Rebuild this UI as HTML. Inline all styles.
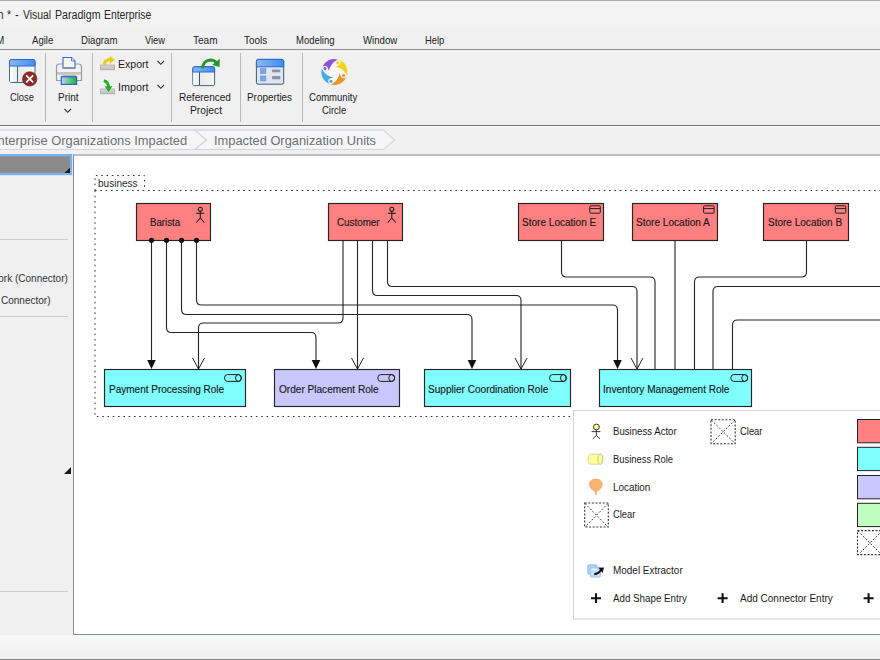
<!DOCTYPE html>
<html><head><meta charset="utf-8"><style>
html,body{margin:0;padding:0;width:880px;height:660px;overflow:hidden;background:#f0f0f0;}
body{position:relative;font-family:"Liberation Sans",sans-serif;}
.a{position:absolute;}
.tx{position:absolute;white-space:pre;line-height:1;font-family:"Liberation Sans",sans-serif;}
</style></head><body>
<!-- title bar -->
<div class="a" style="left:0;top:0;width:880px;height:1px;background:#a8a8a8"></div>
<div class="a" style="left:0;top:1px;width:880px;height:27px;background:linear-gradient(#f4f4f4,#f2f2f2)"></div>
<!-- menu -->
<div class="a" style="left:0;top:28px;width:880px;height:21px;background:#f0f0f0"></div>
<div class="a" style="left:0;top:49px;width:880px;height:1px;background:#8c8c8c"></div>
<!-- toolbar -->
<div class="a" style="left:0;top:50px;width:880px;height:75px;background:#f0f0f0"></div>
<div class="a" style="left:45px;top:53px;width:1px;height:69px;background:#b9b9b9"></div>
<div class="a" style="left:92px;top:53px;width:1px;height:69px;background:#b9b9b9"></div>
<div class="a" style="left:171px;top:53px;width:1px;height:69px;background:#b9b9b9"></div>
<div class="a" style="left:240px;top:53px;width:1px;height:69px;background:#b9b9b9"></div>
<div class="a" style="left:302px;top:53px;width:1px;height:69px;background:#b9b9b9"></div>
<div class="a" style="left:0;top:125px;width:880px;height:1px;background:#737373"></div>
<div class="a" style="left:0;top:126px;width:880px;height:1px;background:#fbfbfb"></div>
<!-- breadcrumb -->
<div class="a" style="left:0;top:127px;width:880px;height:27px;background:#f0f0f0"></div>
<!-- left panel -->
<div class="a" style="left:0;top:155px;width:73px;height:480px;background:#f0f0f0"></div>
<div class="a" style="left:0;top:239px;width:68px;height:1px;background:#cdcdcd"></div>
<div class="a" style="left:0;top:316px;width:68px;height:1px;background:#cdcdcd"></div>
<div class="a" style="left:0;top:591px;width:68px;height:1px;background:#cdcdcd"></div>
<!-- canvas -->
<div class="a" style="left:73px;top:154px;width:807px;height:481px;background:#ffffff;box-sizing:border-box;border-left:1px solid #858b97;border-top:2px solid #bdbfc5;border-bottom:1px solid #858b97"></div>
<!-- status bar -->
<div class="a" style="left:0;top:635px;width:880px;height:24px;background:linear-gradient(#f9f9f9,#efefef)"></div>
<div class="a" style="left:0;top:659px;width:880px;height:1px;background:#8a8a8a"></div>

<svg class="a" style="left:0;top:0" width="880" height="660" viewBox="0 0 880 660">
<!-- breadcrumb tabs -->
<path d="M-5,130.2 H195 L206.5,140 L195,149.5 H-5 Z" fill="#f6f6f6" stroke="#d3d6db" stroke-width="1.2"/>
<path d="M195,130.2 H383.5 L394.5,140 L383.5,149.5 H195 L206.5,140 Z" fill="#f6f6f6" stroke="#d3d6db" stroke-width="1.2"/>
<!-- left header -->
<rect x="-2" y="155.2" width="73" height="18.8" fill="#8a8a8a" stroke="#78b2ea" stroke-width="2.4"/>
<path d="M64.5,173 H70 V167.5 Z" fill="#1a1a1a"/>
<path d="M64,474 H71 V467 Z" fill="#1a1a1a"/>

<!-- package -->
<g fill="none" stroke="#333" stroke-width="1" stroke-dasharray="1.6 3.7">
<path d="M95,190.5 V175.5 H144.5 V190.5"/>
<path d="M95,190.5 H890 M95,190.5 V416.5 H573"/>
</g>

<!-- connectors -->
<g fill="none" stroke="#262626" stroke-width="1.12">
<!-- barista -->
<path d="M151.5,240 V362"/>
<path d="M166.5,240 V327.5 Q166.5,332.5 171.5,332.5 H311 Q316,332.5 316,337.5 V362"/>
<path d="M181.5,240 V309.5 Q181.5,314.5 186.5,314.5 H467 Q472,314.5 472,319.5 V362"/>
<path d="M196.5,240 V300 Q196.5,305 201.5,305 H612.5 Q617.5,305 617.5,310 V362"/>
<!-- customer -->
<path d="M343,240 V318 Q343,323 338,323 H203.5 Q198.5,323 198.5,328 V369"/>
<path d="M357.5,240 V369"/>
<path d="M372.5,240 V290.5 Q372.5,295.5 377.5,295.5 H516 Q521,295.5 521,300.5 V369"/>
<path d="M387.5,240 V281.5 Q387.5,286.5 392.5,286.5 H632 Q637,286.5 637,291.5 V369"/>
<!-- store E -->
<path d="M561.5,240 V272 Q561.5,277 566.5,277 H650 Q655,277 655,282 V369"/>
<!-- store A -->
<path d="M675,240 V369"/>
<!-- store B -->
<path d="M806.5,240 V272 Q806.5,277 801.5,277 H699.5 Q694.5,277 694.5,282 V369"/>
<path d="M880,286.5 H718 Q713,286.5 713,291.5 V369"/>
<path d="M880,320 H737.5 Q732.5,320 732.5,325 V369"/>
</g>
<!-- arrowheads filled -->
<g fill="#111">
<path d="M147.2,359.9 H155.8 L151.5,369 Z"/>
<path d="M311.7,359.9 H320.3 L316,369 Z"/>
<path d="M467.7,359.9 H476.3 L472,369 Z"/>
<path d="M613.2,359.9 H621.8 L617.5,369 Z"/>
</g>
<g fill="none" stroke="#222" stroke-width="1">
<path d="M192.5,358 L198.5,369 L204.5,358"/>
<path d="M351.5,358 L357.5,369 L363.5,358"/>
<path d="M515,358 L521,369 L527,358"/>
<path d="M631,358 L637,369 L643,358"/>
</g>

<!-- top boxes -->
<g stroke="#262626" stroke-width="1.15">
<rect x="136.5" y="203.5" width="74" height="37" fill="#ff8080"/>
<rect x="328.5" y="203.5" width="74" height="37" fill="#ff8080"/>
<rect x="518.5" y="203.5" width="85" height="37" fill="#ff8080"/>
<rect x="632.5" y="203.5" width="85" height="37" fill="#ff8080"/>
<rect x="763.5" y="203.5" width="85" height="37" fill="#ff8080"/>
</g>
<!-- actor icons -->
<g fill="none" stroke="#1a1a1a" stroke-width="1.05">
<g transform="translate(200.3,207)"><circle cx="0" cy="2.2" r="2"/><path d="M0,4.2 V11 M-4,6.3 H4 M-4,15.5 L0,11 L4,15.5"/></g>
<g transform="translate(391.8,207)"><circle cx="0" cy="2.2" r="2"/><path d="M0,4.2 V11 M-4,6.3 H4 M-4,15.5 L0,11 L4,15.5"/></g>
</g>
<!-- location icons -->
<g fill="none" stroke="#222" stroke-width="1">
<rect x="589.8" y="205.8" width="10.5" height="7.4" rx="0.9"/><path d="M589.8,208.6 H600.3"/>
<rect x="703.6" y="205.8" width="10.5" height="7.4" rx="0.9"/><path d="M703.6,208.6 H714.1"/>
<rect x="835.3" y="205.8" width="10.5" height="7.4" rx="0.9"/><path d="M835.3,208.6 H845.8"/>
</g>

<!-- bottom boxes -->
<g stroke="#262626" stroke-width="1.15">
<rect x="104.5" y="369.5" width="141" height="37" fill="#80ffff"/>
<rect x="274.5" y="369.5" width="125" height="37" fill="#c8c8ff"/>
<rect x="424.5" y="369.5" width="146" height="37" fill="#80ffff"/>
<rect x="599.5" y="369.5" width="152" height="37" fill="#80ffff"/>
</g>
<!-- role icons -->
<g fill="none" stroke="#222" stroke-width="1">
<g transform="translate(224.5,374.6)"><path d="M3,0 H13.9 A3,3.4 0 0 1 13.9,6.8 H3 A3,3.4 0 0 1 3,0 Z"/><ellipse cx="13.9" cy="3.4" rx="2.9" ry="3.4"/></g>
<g transform="translate(377.8,374.6)"><path d="M3,0 H13.9 A3,3.4 0 0 1 13.9,6.8 H3 A3,3.4 0 0 1 3,0 Z"/><ellipse cx="13.9" cy="3.4" rx="2.9" ry="3.4"/></g>
<g transform="translate(549.5,374.6)"><path d="M3,0 H13.9 A3,3.4 0 0 1 13.9,6.8 H3 A3,3.4 0 0 1 3,0 Z"/><ellipse cx="13.9" cy="3.4" rx="2.9" ry="3.4"/></g>
<g transform="translate(730.8,374.6)"><path d="M3,0 H13.9 A3,3.4 0 0 1 13.9,6.8 H3 A3,3.4 0 0 1 3,0 Z"/><ellipse cx="13.9" cy="3.4" rx="2.9" ry="3.4"/></g>
</g>

<!-- dots -->
<g fill="#111">
<circle cx="151.5" cy="240.3" r="2.6"/><circle cx="166.5" cy="240.3" r="2.6"/><circle cx="181.5" cy="240.3" r="2.6"/><circle cx="196.5" cy="240.3" r="2.6"/>
</g>
<!-- popup -->
<rect x="573.5" y="410.5" width="320" height="208.5" fill="#ffffff" stroke="#d4d4d4" stroke-width="1"/>
</svg>
<svg class="a" style="left:0;top:0" width="880" height="660" viewBox="0 0 880 660">
<defs>
<linearGradient id="hdr" x1="0" x2="1" y1="0" y2="0"><stop offset="0" stop-color="#8fb8ea"/><stop offset="1" stop-color="#3d8ff0"/></linearGradient>
<linearGradient id="pane" x1="0" x2="1"><stop offset="0" stop-color="#e2e2e2"/><stop offset="1" stop-color="#f6f6f6"/></linearGradient>
<linearGradient id="pane2" x1="0" x2="1"><stop offset="0" stop-color="#ffffff"/><stop offset="1" stop-color="#e8e8e8"/></linearGradient>
<linearGradient id="outp" x1="0" x2="1"><stop offset="0" stop-color="#b8d8f0"/><stop offset="1" stop-color="#18b828"/></linearGradient>
<linearGradient id="tray" x1="0" x2="0" y1="0" y2="1"><stop offset="0" stop-color="#d8d8d8"/><stop offset="1" stop-color="#bdbdbd"/></linearGradient>
<radialGradient id="cc" cx="0.5" cy="0.5" r="0.5"><stop offset="0" stop-color="#ffffff"/><stop offset="1" stop-color="#ececec"/></radialGradient>
</defs>
<!-- Close icon -->
<g>
<rect x="9.5" y="59.5" width="25.5" height="23" rx="2" fill="url(#pane)" stroke="#3a6f80" stroke-width="1"/>
<rect x="10" y="66" width="7.5" height="16" fill="url(#pane2)"/>
<path d="M17.5,66 V82.5" stroke="#3a6f80" stroke-width="1"/>
<path d="M9.5,66 V61.5 Q9.5,59.5 11.5,59.5 H33 Q35,59.5 35,61.5 V66 Z" fill="url(#hdr)" stroke="#2a66dc" stroke-width="1"/>
<circle cx="29.7" cy="78.9" r="7.2" fill="#8e2a2a" stroke="#5a1a1a" stroke-width="0.6"/>
<path d="M26.2,75.4 L33.2,82.4 M33.2,75.4 L26.2,82.4" stroke="#ffffff" stroke-width="1.6"/>
</g>
<!-- Print icon -->
<g>
<path d="M56.5,80.5 V67 Q56.5,64 59.5,64 H78.5 Q81.5,64 81.5,67 V80.5 Z" fill="#f2f2f2" stroke="#9a9a9a" stroke-width="1.2"/>
<rect x="57" y="72" width="24" height="2.8" fill="#c4c4c4"/>
<path d="M63,57.5 H71.5 L75,61 V68 H63 Z" fill="#f6f6f6" stroke="#2a6ae0" stroke-width="1.1"/>
<path d="M71.5,57.5 V61 H75" fill="#d8e4f8" stroke="#2a6ae0" stroke-width="0.8"/>
<rect x="63" y="67.3" width="12" height="1.4" fill="#888"/>
<rect x="62.5" y="75.5" width="13.5" height="1.3" fill="#7a7a7a"/>
<rect x="61.3" y="76.8" width="15.3" height="7.6" fill="url(#outp)" stroke="#2a60e0" stroke-width="1.2"/>
<path d="M64.5,109 L67.8,112.3 L71,109" fill="none" stroke="#333" stroke-width="1.1"/>
</g>
<!-- Export / Import -->
<g>
<rect x="100.5" y="65" width="14" height="4.8" fill="url(#tray)" stroke="#a8a8a8" stroke-width="0.8"/>
<path d="M104.2,65 Q104.6,59.8 110.5,59.6" fill="none" stroke="#eacb1a" stroke-width="3"/>
<path d="M109.6,55.8 L115,59.8 L109.6,63.8 Z" fill="#eacb1a"/>
<rect x="100.5" y="89" width="14" height="4.8" fill="url(#tray)" stroke="#a8a8a8" stroke-width="0.8"/>
<path d="M103.8,80.6 Q108.4,81.6 108.6,87.5" fill="none" stroke="#22b022" stroke-width="3"/>
<path d="M104.6,86.2 L108.6,92 L112.4,86.2 Z" fill="#22b022"/>
<path d="M157.5,61 L160.8,64.3 L164,61" fill="none" stroke="#333" stroke-width="1.1"/>
<path d="M157.5,85 L160.8,88.3 L164,85" fill="none" stroke="#333" stroke-width="1.1"/>
</g>
<!-- Referenced Project -->
<g>
<rect x="192.8" y="66.8" width="21.8" height="18.8" rx="1.5" fill="url(#pane)" stroke="#3a6f80" stroke-width="1"/>
<rect x="193.3" y="72" width="6.2" height="13" fill="url(#pane2)"/>
<path d="M199.5,72 V85.5" stroke="#2f5f70" stroke-width="1"/>
<path d="M192.8,72 V68.8 Q192.8,66.8 194.8,66.8 H212.6 Q214.6,66.8 214.6,68.8 V72 Z" fill="url(#hdr)" stroke="#2a66dc" stroke-width="1"/>
<path d="M202.3,68.3 Q203.5,60.2 210.5,60 Q214.5,60 216.5,63" fill="none" stroke="#28982a" stroke-width="2.8"/>
<path d="M219.8,58.8 L219.5,67 L212.2,65 Z" fill="#28982a"/>
</g>
<!-- Properties -->
<g>
<rect x="256.4" y="59.4" width="27.3" height="24.8" rx="1.8" fill="#dfe6f2" stroke="#2f6070" stroke-width="1"/>
<path d="M256.4,66.8 V61.4 Q256.4,59.4 258.4,59.4 H281.7 Q283.7,59.4 283.7,61.4 V66.8 Z" fill="url(#hdr)" stroke="#2a66dc" stroke-width="1"/>
<rect x="260.3" y="68.6" width="5.6" height="5" fill="#7aa8e8" stroke="#5a88d8" stroke-width="0.5"/>
<rect x="260.3" y="76" width="5.6" height="5" fill="#7aa8e8" stroke="#5a88d8" stroke-width="0.5"/>
<rect x="272.1" y="69.5" width="8.2" height="2.8" fill="#8a93a2"/>
<rect x="272.1" y="76.1" width="8.2" height="3.2" fill="#8a93a2"/>
</g>
<!-- Community circle -->
<g>
<circle cx="334.3" cy="72" r="13.6" fill="#e4e4e4" opacity="0.6"/>
<circle cx="334.3" cy="72" r="12.9" fill="url(#cc)"/>
<g transform="translate(334.3,72)">
<g transform="rotate(0)"><path d="M3.3,-12.6 A12.9,12.9 0 0 0 -11.9,-5.2 Q-8.2,-7.6 -6.6,-4.6 Q-5.6,-2.6 -5.4,-0.8 Q-4.2,-8.6 3.3,-12.6 Z" fill="#8c52d6"/><circle cx="-9.3" cy="-3.4" r="1.5" fill="#8c52d6"/></g>
<g transform="rotate(90)"><path d="M3.3,-12.6 A12.9,12.9 0 0 0 -11.9,-5.2 Q-8.2,-7.6 -6.6,-4.6 Q-5.6,-2.6 -5.4,-0.8 Q-4.2,-8.6 3.3,-12.6 Z" fill="#f5d20a"/><circle cx="-9.3" cy="-3.4" r="1.5" fill="#f5d20a"/></g>
<g transform="rotate(180)"><path d="M3.3,-12.6 A12.9,12.9 0 0 0 -11.9,-5.2 Q-8.2,-7.6 -6.6,-4.6 Q-5.6,-2.6 -5.4,-0.8 Q-4.2,-8.6 3.3,-12.6 Z" fill="#ec9428"/><circle cx="-9.3" cy="-3.4" r="1.5" fill="#ec9428"/></g>
<g transform="rotate(270)"><path d="M3.3,-12.6 A12.9,12.9 0 0 0 -11.9,-5.2 Q-8.2,-7.6 -6.6,-4.6 Q-5.6,-2.6 -5.4,-0.8 Q-4.2,-8.6 3.3,-12.6 Z" fill="#44ace4"/><circle cx="-9.3" cy="-3.4" r="1.5" fill="#44ace4"/></g>
</g>
</g>

<!-- popup icons -->
<g>
<circle cx="596.4" cy="427" r="2.9" fill="#ffff99" stroke="#222" stroke-width="0.9"/>
<path d="M596.4,430 V435.5 M591.6,431.6 H600.4 M592.8,438.8 L596.4,435.5 L600,438.8" fill="none" stroke="#222" stroke-width="0.9"/>
<path d="M590.8,454.2 H600.3 A2.5,5 0 0 1 600.3,464.2 H590.8 A2.8,5 0 0 1 590.8,454.2 Z" fill="#ffff99" stroke="#c8c8a8" stroke-width="0.8"/>
<ellipse cx="600.3" cy="459.2" rx="2.4" ry="5" fill="#ffff99" stroke="#b8b898" stroke-width="0.8"/>
<path d="M595.8,495.2 L594.9,491.6 C592,489.8 589.3,487.4 589.3,484.6 C589.3,480.9 592.2,479 595.8,479 C599.4,479 602.3,480.9 602.3,484.6 C602.3,487.4 599.6,489.8 596.7,491.6 Z" fill="#f8b272" stroke="#f0a060" stroke-width="0.6"/>
</g>
<g fill="none" stroke="#333" stroke-width="1.1" stroke-dasharray="2 1.6">
<rect x="584.7" y="503" width="23.6" height="24"/>
<rect x="711" y="419.8" width="24.2" height="24"/>
<rect x="857.5" y="530.6" width="30" height="24"/>
</g>
<g fill="none" stroke="#3a3a3a" stroke-width="1" stroke-dasharray="1.8 1.8">
<path d="M585,503.5 L608,527 M608,503.5 L585,527"/>
<path d="M711.3,420 L735,443.5 M735,420 L711.3,443.5"/>
<path d="M858,531 L882,555 M882,531 L858,555"/>
</g>
<!-- model extractor -->
<g>
<rect x="587.8" y="564.9" width="9.2" height="9.2" rx="0.8" fill="#b8d2f4" stroke="#8ab6ec" stroke-width="0.9"/>
<rect x="590.2" y="567.3" width="10.2" height="9.8" rx="0.8" fill="#c6dbf6" stroke="#9cc0ee" stroke-width="0.9"/>
<path d="M591.6,569.6 H596.5" stroke="#ffffff" stroke-width="0.8"/>
<path d="M594.3,574.3 Q598.5,573.8 601.2,570" fill="none" stroke="#111" stroke-width="2"/>
<path d="M598.4,567.8 L604,567.6 L602.6,573 Z" fill="#111"/>
</g>
<!-- plus signs -->
<g stroke="#111" stroke-width="2.1">
<path d="M591,598.2 H601 M596,593.3 V603"/>
<path d="M717.6,598.2 H727.6 M722.6,593.3 V603"/>
<path d="M863.6,598.2 H873.6 M868.6,593.3 V603"/>
</g>
<!-- swatches -->
<g stroke="#222" stroke-width="1">
<rect x="857.5" y="419.5" width="30" height="23.3" fill="#ff8080"/>
<rect x="857.5" y="447.3" width="30" height="23.3" fill="#80ffff"/>
<rect x="857.5" y="475.5" width="30" height="23.3" fill="#c8c8ff"/>
<rect x="857.5" y="503.3" width="30" height="23.3" fill="#c0ffc0"/>
</g>
</svg>

<div class="tx" style="left:-2.60px;top:8.94px;font-size:12px;color:#2a2a2a;transform:scaleX(0.8700);transform-origin:6.00px 0;">n</div>
<div class="tx" style="left:6.80px;top:8.94px;font-size:12px;color:#2a2a2a;transform:scaleX(0.8900);transform-origin:0 0;">*</div>
<div class="tx" style="left:15.00px;top:8.94px;font-size:12px;color:#2a2a2a;transform:scaleX(0.9375);transform-origin:0 0;">-</div>
<div class="tx" style="left:22.50px;top:8.94px;font-size:12px;color:#2a2a2a;transform:scaleX(0.8679);transform-origin:0 0;">Visual</div>
<div class="tx" style="left:54.50px;top:8.94px;font-size:12px;color:#2a2a2a;transform:scaleX(0.8859);transform-origin:0 0;">Paradigm</div>
<div class="tx" style="left:104.30px;top:8.94px;font-size:12px;color:#2a2a2a;transform:scaleX(0.8652);transform-origin:0 0;">Enterprise</div>
<div class="tx" style="left:-4.60px;top:34.99px;font-size:11px;color:#1c1c1c;transform:scaleX(0.8700);transform-origin:9.00px 0;">M</div>
<div class="tx" style="left:31.90px;top:34.99px;font-size:11px;color:#1c1c1c;transform:scaleX(0.8709);transform-origin:0 0;">Agile</div>
<div class="tx" style="left:80.60px;top:34.99px;font-size:11px;color:#1c1c1c;transform:scaleX(0.8767);transform-origin:0 0;">Diagram</div>
<div class="tx" style="left:145.00px;top:34.99px;font-size:11px;color:#1c1c1c;transform:scaleX(0.8439);transform-origin:0 0;">View</div>
<div class="tx" style="left:192.50px;top:34.99px;font-size:11px;color:#1c1c1c;transform:scaleX(0.9126);transform-origin:0 0;">Team</div>
<div class="tx" style="left:244.40px;top:34.99px;font-size:11px;color:#1c1c1c;transform:scaleX(0.9053);transform-origin:0 0;">Tools</div>
<div class="tx" style="left:295.60px;top:34.99px;font-size:11px;color:#1c1c1c;transform:scaleX(0.8625);transform-origin:0 0;">Modeling</div>
<div class="tx" style="left:362.50px;top:34.99px;font-size:11px;color:#1c1c1c;transform:scaleX(0.8755);transform-origin:0 0;">Window</div>
<div class="tx" style="left:425.20px;top:34.99px;font-size:11px;color:#1c1c1c;transform:scaleX(0.8487);transform-origin:0 0;">Help</div>
<div class="tx" style="left:9.75px;top:91.99px;font-size:11px;color:#1c1c1c;transform:scaleX(0.8481);transform-origin:0 0;">Close</div>
<div class="tx" style="left:57.50px;top:91.79px;font-size:11px;color:#1c1c1c;transform:scaleX(0.9086);transform-origin:0 0;">Print</div>
<div class="tx" style="left:117.50px;top:58.59px;font-size:11px;color:#1c1c1c;transform:scaleX(0.9611);transform-origin:0 0;">Export</div>
<div class="tx" style="left:117.50px;top:82.19px;font-size:11px;color:#1c1c1c;transform:scaleX(0.9802);transform-origin:0 0;">Import</div>
<div class="tx" style="left:178.75px;top:91.99px;font-size:11px;color:#1c1c1c;transform:scaleX(0.9136);transform-origin:0 0;">Referenced</div>
<div class="tx" style="left:190.00px;top:104.99px;font-size:11px;color:#1c1c1c;transform:scaleX(0.9362);transform-origin:0 0;">Project</div>
<div class="tx" style="left:247.40px;top:92.19px;font-size:11px;color:#1c1c1c;transform:scaleX(0.8986);transform-origin:0 0;">Properties</div>
<div class="tx" style="left:309.40px;top:91.99px;font-size:11px;color:#1c1c1c;transform:scaleX(0.8660);transform-origin:0 0;">Community</div>
<div class="tx" style="left:321.50px;top:104.89px;font-size:11px;color:#1c1c1c;transform:scaleX(0.8609);transform-origin:0 0;">Circle</div>
<div class="tx" style="left:-13.02px;top:134.00px;font-size:13px;color:#6c6f73;transform:scaleX(0.9900);transform-origin:199.92px 0;">Enterprise Organizations Impacted</div>
<div class="tx" style="left:214.40px;top:134.00px;font-size:13px;color:#6c6f73;transform:scaleX(0.9877);transform-origin:0 0;">Impacted Organization Units</div>
<div class="tx" style="left:-43.46px;top:272.71px;font-size:10.5px;color:#333;transform:scaleX(0.9540);transform-origin:110.36px 0;">Framework (Connector)</div>
<div class="tx" style="left:0.85px;top:294.81px;font-size:10.5px;color:#333;transform:scaleX(0.9535);transform-origin:0 0;">Connector)</div>
<div class="tx" style="left:98.30px;top:179.03px;font-size:10px;color:#2a2a2a;transform:scaleX(1.0034);transform-origin:0 0;">business</div>
<div class="tx" style="left:150.40px;top:217.73px;font-size:10px;color:#1a1a1a;transform:scaleX(0.9695);transform-origin:0 0;-webkit-text-stroke:0.15px #1a1a1a">Barista</div>
<div class="tx" style="left:336.50px;top:217.83px;font-size:10px;color:#1a1a1a;transform:scaleX(0.9815);transform-origin:0 0;-webkit-text-stroke:0.15px #1a1a1a">Customer</div>
<div class="tx" style="left:522.30px;top:217.83px;font-size:10px;color:#1a1a1a;transform:scaleX(1.0045);transform-origin:0 0;-webkit-text-stroke:0.15px #1a1a1a">Store Location E</div>
<div class="tx" style="left:636.10px;top:217.83px;font-size:10px;color:#1a1a1a;transform:scaleX(1.0058);transform-origin:0 0;-webkit-text-stroke:0.15px #1a1a1a">Store Location A</div>
<div class="tx" style="left:767.50px;top:217.83px;font-size:10px;color:#1a1a1a;transform:scaleX(1.0018);transform-origin:0 0;-webkit-text-stroke:0.15px #1a1a1a">Store Location B</div>
<div class="tx" style="left:108.70px;top:384.64px;font-size:10px;color:#1a1a1a;transform:scaleX(1.0009);transform-origin:0 0;-webkit-text-stroke:0.15px #1a1a1a">Payment Processing Role</div>
<div class="tx" style="left:278.70px;top:384.64px;font-size:10px;color:#1a1a1a;transform:scaleX(1.0074);transform-origin:0 0;-webkit-text-stroke:0.15px #1a1a1a">Order Placement Role</div>
<div class="tx" style="left:427.60px;top:384.64px;font-size:10px;color:#1a1a1a;transform:scaleX(1.0062);transform-origin:0 0;-webkit-text-stroke:0.15px #1a1a1a">Supplier Coordination Role</div>
<div class="tx" style="left:602.60px;top:384.64px;font-size:10px;color:#1a1a1a;transform:scaleX(1.0066);transform-origin:0 0;-webkit-text-stroke:0.15px #1a1a1a">Inventory Management Role</div>
<div class="tx" style="left:612.75px;top:425.99px;font-size:11px;color:#1a1a1a;transform:scaleX(0.8752);transform-origin:0 0;">Business Actor</div>
<div class="tx" style="left:612.75px;top:453.74px;font-size:11px;color:#1a1a1a;transform:scaleX(0.8548);transform-origin:0 0;">Business Role</div>
<div class="tx" style="left:612.75px;top:481.59px;font-size:11px;color:#1a1a1a;transform:scaleX(0.8982);transform-origin:0 0;">Location</div>
<div class="tx" style="left:613.00px;top:508.99px;font-size:11px;color:#1a1a1a;transform:scaleX(0.8489);transform-origin:0 0;">Clear</div>
<div class="tx" style="left:739.75px;top:425.74px;font-size:11px;color:#1a1a1a;transform:scaleX(0.8545);transform-origin:0 0;">Clear</div>
<div class="tx" style="left:612.70px;top:564.74px;font-size:11px;color:#1a1a1a;transform:scaleX(0.9048);transform-origin:0 0;">Model Extractor</div>
<div class="tx" style="left:613.40px;top:592.59px;font-size:11px;color:#1a1a1a;transform:scaleX(0.8881);transform-origin:0 0;">Add Shape Entry</div>
<div class="tx" style="left:740.20px;top:592.59px;font-size:11px;color:#1a1a1a;transform:scaleX(0.9083);transform-origin:0 0;">Add Connector Entry</div>
</body></html>
